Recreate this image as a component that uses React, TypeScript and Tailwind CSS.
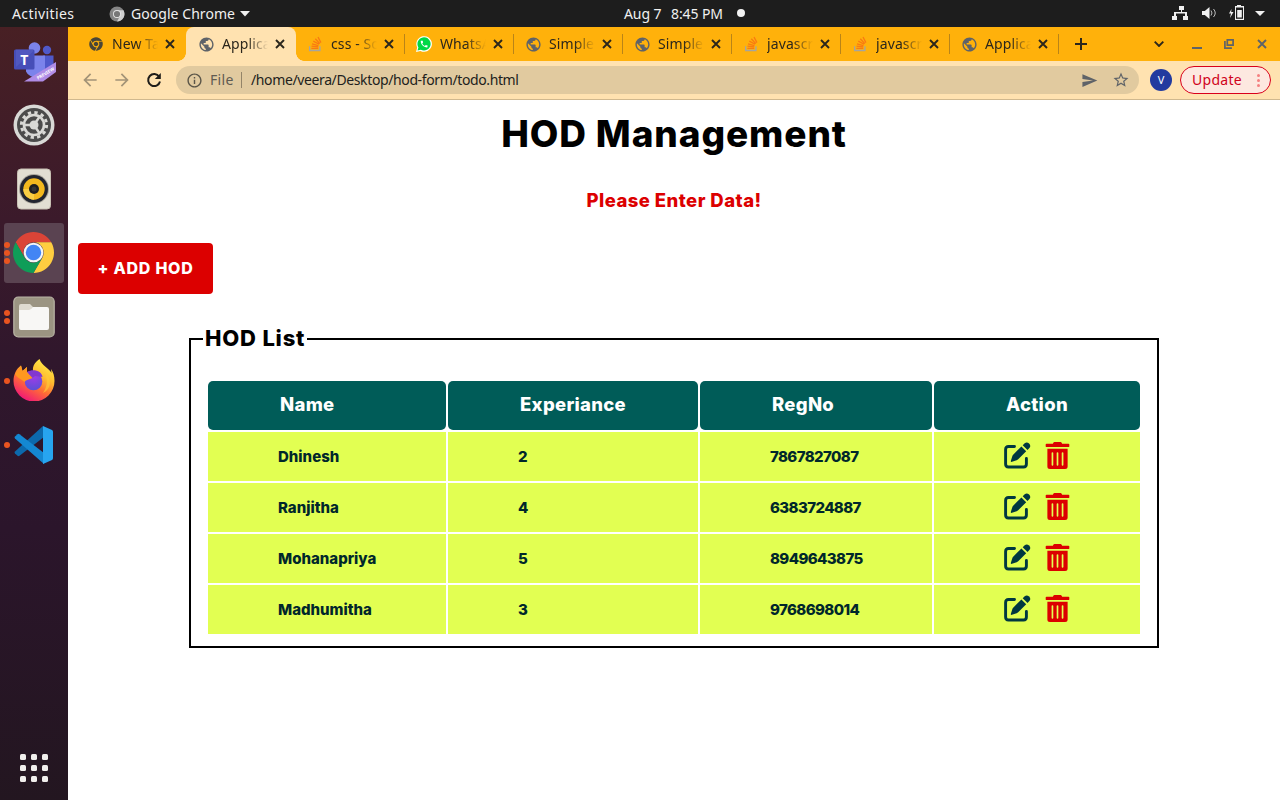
import React from "react";
import { FaChrome, FaTrashAlt } from "react-icons/fa";
import { MdPublic, MdCall, MdOutlineInfo, MdArrowBack, MdArrowForward, MdSend, MdStarBorder } from "react-icons/md";

function StackIcon() {
  return (
    <svg viewBox="0 0 16 16" className="h-4 w-4" fill="none">
      <path d="M2.6 10.2v4.3h10.3v-4.3" stroke="#a5a5a0" strokeWidth="1.3" />
      <g stroke="#f97a12" strokeWidth="1.3">
        <path d="M4.4 12.4h6.8M4.5 10.2l6.7.7M5 7.8l6.4 1.8M6.3 5.1l5.8 3.2M8.3 2.8l4.5 4.8M11 1l2.9 5.6" />
      </g>
    </svg>
  );
}

function WhatsappIcon() {
  return (
    <svg viewBox="0 0 16 16" className="h-4 w-4">
      <path d="M0 16l1.2-4.4A7.8 7.8 0 1 1 4.5 14.9z" fill="#fff" />
      <path d="M1.500 14.6l.9-3.2A6.6 6.6 0 1 1 4.8 13.7z" fill="#00d846" />
      <MdCall x="3.6" y="3.6" size={9} color="#fff" />
    </svg>
  );
}

function CrossIcon({ color }: { color: string }) {
  return (
    <svg viewBox="0 0 10 10" className="h-[10px] w-[10px]" fill="none" stroke={color} strokeWidth="1.900">
      <path d="M1 1l8 8M9 1L1 9" />
    </svg>
  );
}

function EditIcon() {
  return (
    <svg viewBox="0 0 27 27" className="h-[27px] w-[27px]" fill="#003840">
      <path d="M10.500 4.500H4.500Q1.600 4.500 1.600 7.400V22Q1.600 25 4.500 25H19.500Q22.400 25 22.400 22V16.500" fill="none" stroke="#003840" strokeWidth="2.900" strokeLinecap="round" />
      <path d="M7.200 19.900Q6.600 19.800 6.800 19L8.300 14.200Q8.600 13.200 9.400 12.400L17.400 4.500L22.200 9.300L14.200 17.200Q13.500 17.900 12.600 18.200z" />
      <path d="M18.700 3.200L20.700 1.300Q22.900-.5 25.100 1.600T25.400 6L23.500 8z" />
    </svg>
  );
}

const tabs = [
  { icon: "chrome", title: "New Tab" },
  { icon: "globe", title: "Application" },
  { icon: "stack", title: "css - Scroll" },
  { icon: "whatsapp", title: "WhatsApp" },
  { icon: "globe", title: "Simple form" },
  { icon: "globe", title: "Simple form" },
  { icon: "stack", title: "javascript" },
  { icon: "stack", title: "javascript" },
  { icon: "globe", title: "Application" },
];

function TabIcon({ kind }: { kind: string }) {
  if (kind === "chrome") return <FaChrome size={14} color="#4a4637" className="ml-px" />;
  if (kind === "stack") return <StackIcon />;
  if (kind === "whatsapp") return <WhatsappIcon />;
  return <MdPublic size={17} color="#5f6368" />;
}

function TopBar() {
  return (
    <header className="grid h-[27px] shrink-0 grid-cols-[1fr_auto_1fr] items-center bg-[#1d1d1d] text-[14px] text-[#f0f0f0]">
      <div className="flex items-center pl-3">
        <span className="w-[97px] tracking-[0.4px]">Activities</span>
        <svg viewBox="-8 -8 16 16" className="h-4 w-4">
          <circle r="7.5" fill="#858585" />
          <path d="M0-3.7h6.5A7.5 7.5 0 0 1 0 7.5L3.2 1.8z" fill="#d0d0d0" />
          <circle r="4" fill="#e4e4e4" />
          <circle r="3.1" fill="#777" />
        </svg>
        <span className="ml-[6px] w-[105px] whitespace-nowrap tracking-[0.05px]">Google Chrome</span>
        <svg viewBox="0 0 10 6" className="ml-1 h-[6px] w-[10px]" fill="#f0f0f0"><path d="M0 0h10L5 5.5z" /></svg>
      </div>
      <div className="-mt-px flex items-center whitespace-nowrap pl-[89px] tracking-[-0.1px]">
        <span className="w-[47px]">Aug 7</span>
        <span className="w-[53px]">8:45 PM</span>
        <span className="ml-[13px] h-2 w-2 rounded-full bg-[#f2f2f2]" />
      </div>
      <div className="-mt-px flex items-center justify-end pr-[15px]">
        <svg viewBox="0 0 93 16" className="h-4 w-[93px]" fill="#f0f0f0">
          <path d="M7 1h5v4h-2v2h5v4h1v4h-5v-4h2V8.500H4V11h1v4H0v-4h2V7h7V5H7z" />
          <path d="M30 6h2.800L37.500 2v12L32.800 10H30z" />
          <path d="M39 5.500q2 2.500 0 5M41.500 4q3.500 4 0 8" fill="none" stroke="#bdbdbd" strokeWidth="1" />
          <path d="M59.500 4L57 8.500h2l-1 4.500 3.500-6h-2.300zM65 0h4v1h3v14h-9V1h2z" />
          <path d="M64 2.500h7v11.300h-7z" fill="#1d1d1d" /><path d="M65.200 5h4.600v7.500h-4.600z" />
          <path d="M83 6h10l-5 5z" />
        </svg>
      </div>
    </header>
  );
}

function TeamsIcon() {
  return (
    <svg viewBox="0 0 44 42" className="h-[42px] w-[44px]">
      <circle cx="22.500" cy="8" r="5.800" fill="#7b83eb" />
      <circle cx="35" cy="10" r="4.200" fill="#5059c9" />
      <path d="M31 15.500h10.500v14a8 8 0 0 1-10.500 5z" fill="#4f59cb" />
      <path d="M14 15.500h19v13a10 10 0 0 1-19 3z" fill="#7b83eb" />
      <rect x="2" y="9.500" width="20.500" height="20" rx="1.500" fill="#464eb8" />
      <path d="M4 9.500h17v2L4 27z" fill="#5962c7" opacity=".5" />
      <text x="12.200" y="24.500" textAnchor="middle" fill="#fff" fontSize="14" fontWeight="700" fontFamily="Noto Sans, sans-serif">T</text>
      <path d="M44 22v10l-13 9.500H12z" fill="#b08ce6" />
      <text transform="translate(26 39.800) rotate(-31)" fill="#fff" fontSize="4.400" fontWeight="700" fontFamily="Noto Sans, sans-serif">PREVIEW</text>
    </svg>
  );
}

function SettingsIcon() {
  return (
    <svg viewBox="-21 -21 42 42" className="h-[42px] w-[42px]">
      <circle r="20.500" fill="#d9d9d6" />
      <circle r="17" fill="#4b4b4b" />
      <circle r="12.600" fill="none" stroke="#d9d9d6" strokeWidth="3" strokeDasharray="3.300 3.297" />
      <circle r="10" fill="none" stroke="#d9d9d6" strokeWidth="2.600" />
      <circle r="4.500" fill="#d9d9d6" />
      <path d="M-10 0h7M2-3l4-6M2 3l4 6" stroke="#d9d9d6" strokeWidth="2.400" />
    </svg>
  );
}

function MusicIcon() {
  return (
    <svg viewBox="-21 -21 42 42" className="h-[42px] w-[42px]">
      <rect x="-16.500" y="-20" width="33" height="40" rx="3.500" fill="#e2ded3" stroke="#c8c1b4" strokeWidth="1" />
      <circle r="15" fill="#aaa69c" />
      <circle r="14" fill="#222530" />
      <circle r="10.700" fill="#f3b81e" />
      <path d="M-10.700 0a10.700 10.700 0 0 0 10.700 10.700V0z" fill="#f9ce45" />
      <circle r="5" fill="#1e1e20" />
      <circle r="2.500" fill="#353535" />
    </svg>
  );
}

function ChromeIcon() {
  const sector = "M0-12L20.780-12A24 24 0 0 0-20.780-12L-10.390 6A12 12 0 0 1 0-12z";
  return (
    <svg viewBox="-24 -24 48 48" className="-ml-px -mt-px h-[41px] w-[41px]">
      <path d={sector} fill="#db4437" />
      <path d={sector} fill="#ffcd40" transform="rotate(120)" />
      <path d={sector} fill="#0f9d58" transform="rotate(240)" />
      <circle r="11.500" fill="#f5f5f5" />
      <circle r="9" fill="#4285f4" />
    </svg>
  );
}

function FilesIcon() {
  return (
    <svg viewBox="0 0 42 42" className="h-[42px] w-[42px]">
      <rect x=".8" y="1" width="40.400" height="40" rx="4.500" fill="#9b9482" stroke="#b9b4a5" strokeWidth="1.200" />
      <path d="M6 10q0-2 2-2h9l3 3h12v10H6z" fill="#dfdbd0" />
      <path d="M6 14h10q2 0 4-3h14q2 0 2 2v19q0 2-2 2H8q-2 0-2-2z" fill="#f8f7f5" />
    </svg>
  );
}

function FirefoxIcon() {
  return (
    <svg viewBox="0 0 42 42" className="-mt-[2px] h-[42px] w-[42px]">
      <defs>
        <linearGradient id="fire" x1=".85" y1=".05" x2=".3" y2="1">
          <stop offset="0" stopColor="#fff04a" /><stop offset=".35" stopColor="#ffbd2f" /><stop offset=".62" stopColor="#ff6e34" /><stop offset="1" stopColor="#f0147a" />
        </linearGradient>
        <radialGradient id="orb" cx=".5" cy=".2" r=".8">
          <stop offset="0" stopColor="#a23be8" /><stop offset="1" stopColor="#5b4fd6" />
        </radialGradient>
      </defs>
      <path d="M26.500 0c-5 4-7 7-6.500 12L14 13V8L9.500 12 8 6.500C3 10 .5 16 .5 22a20.500 20.500 0 0 0 41 0c0-5-1-8.500-3.500-12l.5 4C36 9 29 7 26.500 0z" fill="url(#fire)" />
      <circle cx="20.500" cy="22.500" r="8.800" fill="url(#orb)" />
      <path d="M2 15L8 6.500l1.500 5.500L14 8v5l5.500 5c1 2-5 1.500-8 5-3-3-6-3-9.500-8z" fill="#ff981f" />
      <path d="M14 13c6-4 15-1 15.500 5L22 17l-2.500 2z" fill="#8238d0" />
      <path d="M31 12c8 7 8 18-1 22 5-7 5-15 1-22z" fill="#ffc93a" opacity=".65" />
    </svg>
  );
}

function CodeIcon() {
  return (
    <svg viewBox="0 0 40 40" className="h-10 w-10">
      <path d="M29 1L1 26.500q-1 1 0 2l2.500 2.300q1 .7 2 0L30 12z" fill="#0c69ac" />
      <path d="M30 39L1 13.500q-1-1 0-2l2.500-2.300q1-.7 2 0L30 28z" fill="#1488d2" />
      <path d="M29 1l9 4q1 .5 1 2v26q0 1.500-1 2l-9 4z" fill="#27a5f0" />
    </svg>
  );
}

const dockItems = [
  { name: "teams", icon: <TeamsIcon />, dots: 0, active: false },
  { name: "settings", icon: <SettingsIcon />, dots: 0, active: false },
  { name: "music", icon: <MusicIcon />, dots: 0, active: false },
  { name: "chrome", icon: <ChromeIcon />, dots: 3, active: true },
  { name: "files", icon: <FilesIcon />, dots: 2, active: false },
  { name: "firefox", icon: <FirefoxIcon />, dots: 1, active: false },
  { name: "code", icon: <CodeIcon />, dots: 1, active: false },
];

function Dock() {
  return (
    <nav className="flex w-[68px] shrink-0 flex-col bg-[linear-gradient(#482024_0%,#3b1a2b_25%,#30172c_43%,#2b152b_65%,#231620_100%)] px-1 pt-1">
      <div className="flex flex-col gap-1">
        {dockItems.map((item) => (
          <div key={item.name} className={item.active ? "flex h-[60px] items-center rounded-[3px] bg-[#5a4351]" : "flex h-[60px] items-center"}>
            <div className="flex w-[8px] flex-col items-center gap-[2px]">
              {Array.from({ length: item.dots }, (_, i) => <span key={i} className="-ml-[2px] h-[6px] w-[6px] rounded-full bg-[#e95420]" />)}
            </div>
            <div className="flex w-[44px] justify-center">{item.icon}</div>
          </div>
        ))}
      </div>
      <div className="mb-[18px] mt-auto grid grid-cols-3 gap-[5px] self-center">
        {Array.from({ length: 9 }, (_, i) => <span key={i} className="h-[6px] w-[6px] rounded-[1.500px] bg-[#f0eeec]" />)}
      </div>
    </nav>
  );
}

function tabShape(index: number) {
  if (index === 0) return "flex h-full w-[108px] items-center pl-[10px]";
  if (index === 1) return "relative flex h-full w-[110px] items-center rounded-t-[8px] bg-[#ffe2b0] pl-[12px]";
  return "flex h-full w-[109px] items-center pl-[11px]";
}

function TabStrip() {
  return (
    <div className="flex h-[34px] shrink-0 items-center bg-[#ffb10b] pl-[10px] text-[14px] text-[#2b261c]">
      {tabs.map((tab, i) => (
        <div key={i} className={tabShape(i)}>
          {i === 1 && <span className="absolute -left-2 bottom-0 h-2 w-2 bg-[radial-gradient(circle_at_0_0,#ffb10b_7.500px,#ffe2b0_8px)]" />}
          {i === 1 && <span className="absolute -right-2 bottom-0 h-2 w-2 bg-[radial-gradient(circle_at_100%_0,#ffb10b_7.500px,#ffe2b0_8px)]" />}
          <span className="flex w-[24px] items-center"><TabIcon kind={tab.icon} /></span>
          <span className="-mt-[2px] mr-[7px] w-[46px] overflow-hidden whitespace-nowrap tracking-[0.1px] [mask-image:linear-gradient(90deg,#000_55%,transparent)]">{tab.title}</span>
          <CrossIcon color="#2b261c" />
          {i > 1 && <span className="ml-auto h-5 w-px bg-[#b98418]" />}
        </div>
      ))}
      <svg viewBox="0 0 12 12" className="ml-4 h-3 w-3" stroke="#2b261c" strokeWidth="2"><path d="M6 0v12M0 6h12" /></svg>
      <div className="ml-auto flex items-center pr-[13px]">
        <svg viewBox="0 0 10 6" className="mr-[28px] h-[6px] w-[10px]" fill="none" stroke="#2b261c" strokeWidth="1.900"><path d="M.7.700L5 5 9.300.700" /></svg>
        <span className="mr-[22px] mt-[8px] h-[2px] w-[10px] bg-[#5f6368]" />
        <svg viewBox="0 0 10 10" className="mr-[23px] h-[10px] w-[10px]" fill="none" stroke="#5f6368" strokeWidth="1.700"><path d="M3.300.9h5.800v5.200H3.300zM.9 2v7.100h7" /></svg>
        <CrossIcon color="#5f6368" />
      </div>
    </div>
  );
}

function Toolbar() {
  return (
    <div className="flex h-[39px] shrink-0 items-center border-b border-[#d0b88e] bg-[#ffe2b0] pl-3 pr-[9px] text-[14px]">
      <MdArrowBack size={20} color="#a39377" />
      <MdArrowForward size={20} color="#a39377" className="ml-3" />
      <svg viewBox="0 0 20 20" className="ml-3 h-5 w-5" fill="none" stroke="#1f1d19" strokeWidth="2">
        <path d="M15.200 6.800A6 6 0 1 0 16 11.500" />
        <path d="M16.800 3v6h-6z" fill="#1f1d19" stroke="none" />
      </svg>
      <div className="ml-[12px] flex h-7 w-[963px] items-center rounded-full bg-[#e1ca9f] pl-[10px] pr-[9px]">
        <MdOutlineInfo size={17} color="#5a5548" />
        <span className="-mt-[2px] ml-[7px] w-[31px] tracking-[0.3px] text-[#5f5b52]">File</span>
        <span className="h-4 w-px bg-[#938468]" />
        <span className="-mt-[2px] ml-[9px] tracking-[-0.38px] text-[#221e1c]">/home/veera/Desktop/hod-form/todo.html</span>
        <MdSend size={17} color="#5f6368" className="ml-auto" />
        <MdStarBorder size={18} color="#5f6368" className="ml-[14px]" />
      </div>
      <span className="ml-[11px] flex h-[22px] w-[22px] items-center justify-center rounded-full bg-[#223a9f] text-[11px] text-white">V</span>
      <div className="ml-auto flex h-7 w-[91px] items-center rounded-full border border-[#d9001b] bg-[#fde8e0] pl-[11px] text-[#d0021b]">
        <span className="-mt-[2px] w-[53px] tracking-[0.3px]">Update</span>
        <span className="ml-[12px] flex flex-col gap-[2px]">
          {[0, 1, 2].map((i) => <span key={i} className="h-[3px] w-[3px] rounded-full bg-[#f58080]" />)}
        </span>
      </div>
    </div>
  );
}

const rows = [
  ["Dhinesh", "2", "7867827087"],
  ["Ranjitha", "4", "6383724887"],
  ["Mohanapriya", "5", "8949643875"],
  ["Madhumitha", "3", "9768698014"],
];

const columns = "grid grid-cols-[238px_250px_232px_206px] gap-[2px]";

function Page() {
  return (
    <main className="flex flex-1 flex-col bg-white font-['Inter',sans-serif] font-extrabold text-black">
      <h1 className="mt-[9px] text-center text-[37px] leading-[50px] tracking-[0.9px]">HOD Management</h1>
      <p className="mt-[29px] text-center text-[18.500px] leading-6 tracking-[0.450px] text-[#dc0000]">Please Enter Data!</p>
      <button className="ml-[10px] mt-[31px] h-[51px] w-[135px] rounded-[4px] bg-[#dc0000] pb-[2px] text-[16px] tracking-[0.750px] text-white">+ ADD HOD</button>
      <fieldset className="ml-[121px] mt-[28px] h-[326px] w-[970px] border-2 border-black px-[12px]">
        <legend className="h-[34px] w-[104px] whitespace-nowrap px-[2px] text-[22px] leading-[32px] tracking-[0.800px]">HOD List</legend>
        <div className="ml-[5px] mt-[25px] flex flex-col gap-[2px]">
          <div className={columns}>
            {["Name", "Experiance", "RegNo", "Action"].map((label) => (
              <div key={label} className="flex h-[49px] items-center rounded-[5px] bg-[#005c58] pb-[2px] pl-[72px] text-[18.500px] tracking-[0.300px] text-white">{label}</div>
            ))}
          </div>
          {rows.map((row) => (
            <div key={row[0]} className={columns}>
              {row.map((value, i) => (
                <div key={value} className={i === 0 ? "flex h-[49px] items-center bg-[#e2ff52] pl-[70px] pt-px text-[15px] text-[#00272b]" : "flex h-[49px] items-center bg-[#e2ff52] pl-[70px] pt-px text-[15px] tracking-[-0.600px] text-[#00272b]"}>{value}</div>
              ))}
              <div className="flex h-[49px] items-center gap-[14px] bg-[#e2ff52] pb-[2px] pl-[70px]">
                <EditIcon />
                <span className="-ml-[1px] flex w-[27px] justify-center"><FaTrashAlt size={27} color="#dc0000" /></span>
              </div>
            </div>
          ))}
        </div>
      </fieldset>
    </main>
  );
}

export default function App() {
  return (
    <div className="flex h-[800px] w-[1280px] flex-col overflow-hidden font-['Noto_Sans',sans-serif]">
      <TopBar />
      <div className="flex min-h-0 flex-1">
        <Dock />
        <div className="flex min-w-0 flex-1 flex-col">
          <TabStrip />
          <Toolbar />
          <Page />
        </div>
      </div>
    </div>
  );
}
